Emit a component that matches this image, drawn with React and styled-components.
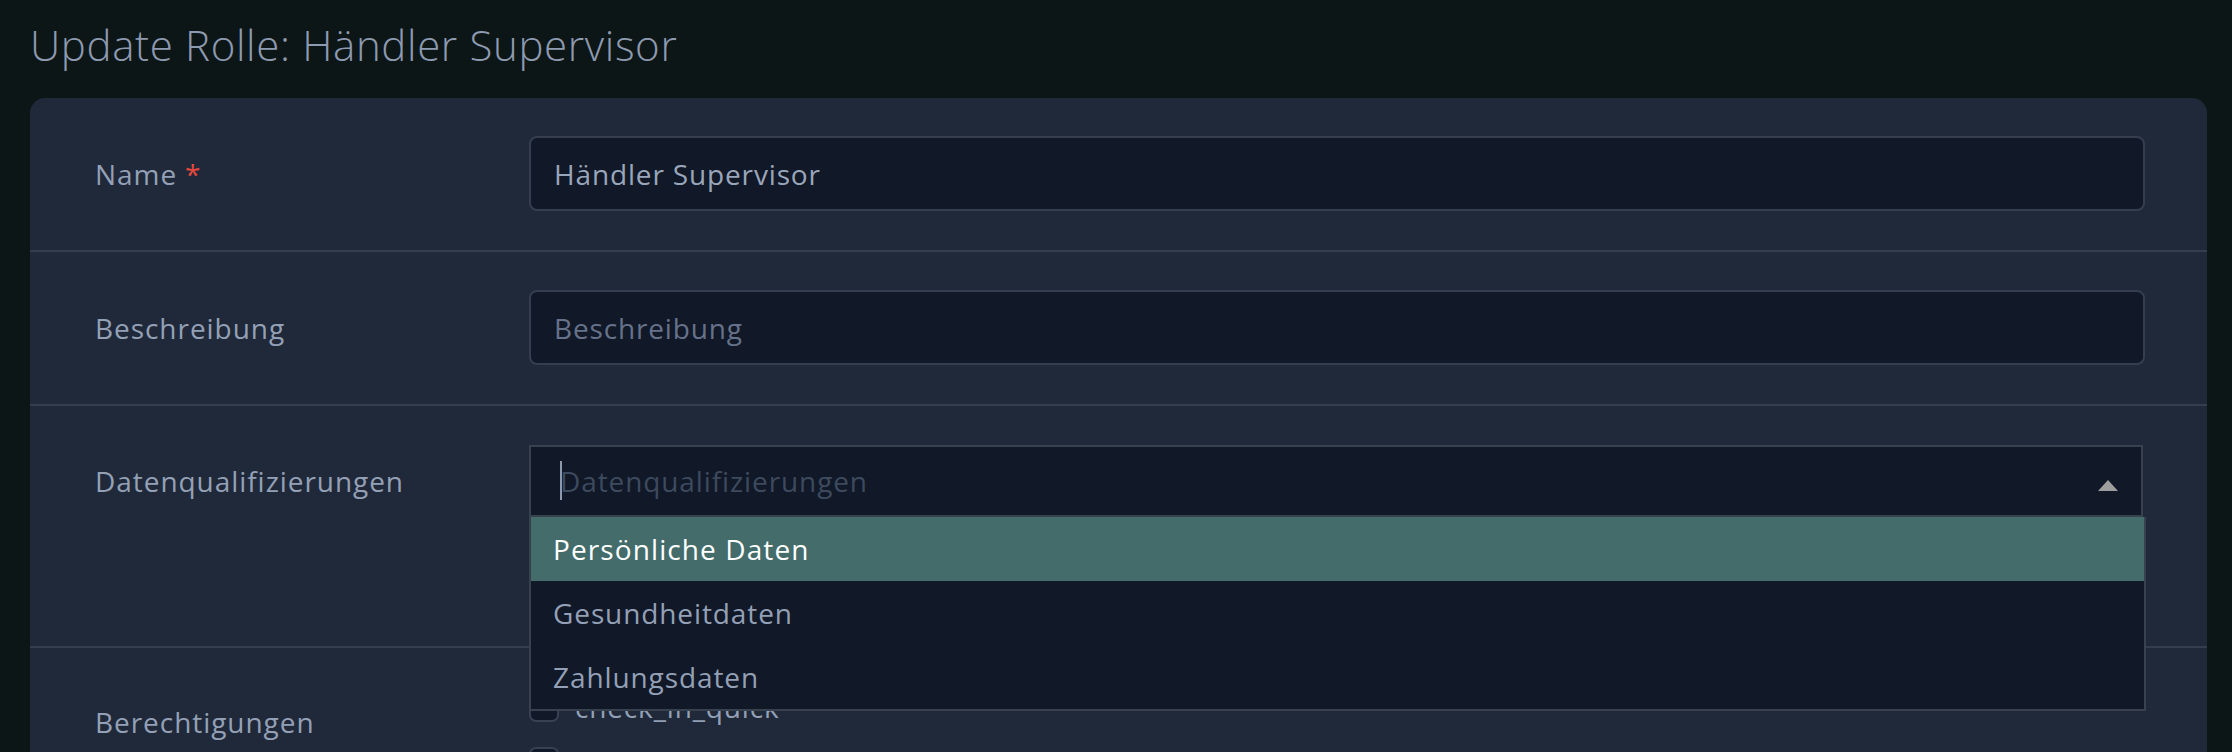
import React from "react";
import styled, { createGlobalStyle } from "styled-components";

const Global = createGlobalStyle`
  html, body { margin: 0; padding: 0; background: #0d1617; }
  body { font-family: "Open Sans", "Noto Sans", sans-serif; overflow: hidden; }
  * { box-sizing: border-box; }
`;

const Page = styled.div`
  width: 2232px;
  height: 752px;
  padding: 20px 25px 0 30px;
  overflow: hidden;
`;

const Title = styled.h1`
  margin: 0 0 28px 0;
  height: 50px;
  font-size: 42px;
  line-height: 50px;
  font-weight: 300;
  color: #8d9ab0;
  letter-spacing: 0.65px;
`;

const Card = styled.div`
  background: #202939;
  border-radius: 15px 15px 0 0;
  min-height: 700px;
`;

const Row = styled.div`
  display: grid;
  grid-template-columns: 434px 1fr;
  align-items: start;
  padding: 38px 62px 39px 65px;
  border-bottom: ${(p) => (p.$last ? "none" : "2px solid #343e4e")};
`;

const Label = styled.div`
  height: ${(p) => p.$h || 75}px;
  margin-top: ${(p) => p.$offset || 0}px;
  display: flex;
  align-items: center;
  font-size: 28px;
  letter-spacing: 0.95px;
  color: #94a0b6;
`;

const Required = styled.span`
  color: #e5483d;
  margin-left: 8px;
`;

const Input = styled.input`
  width: 100%;
  height: 75px;
  background: #111827;
  border: 2px solid #343e4f;
  border-radius: 8px;
  padding: 0 23px;
  font-family: inherit;
  font-size: 28px;
  letter-spacing: 0.85px;
  color: #9aa6ba;
  outline: none;
  &::placeholder { color: #66728a; }
`;

const SelectWrap = styled.div`
  position: relative;
  height: 162px;
  margin-top: 1px;
`;

const SelectBox = styled.div`
  height: 72px;
  background: #111827;
  border: 2px solid #38424f;
  margin-right: 2px;
  display: flex;
  align-items: center;
  padding: 0 23px 0 29px;
  position: relative;
`;

const Cursor = styled.span`
  position: absolute;
  left: 29px;
  top: 14px;
  width: 2px;
  height: 39px;
  background: #8d99ad;
`;

const Placeholder = styled.span`
  flex: 1;
  font-size: 28px;
  letter-spacing: 0.9px;
  color: #3d4a5e;
`;

const Caret = styled.svg`
  width: 20px;
  height: 11px;
  margin-top: 8px;
`;

const Menu = styled.div`
  position: absolute;
  top: 72px;
  left: 0;
  right: -1px;
  background: #111827;
  border: 2px solid #38424f;
  border-top: none;
  z-index: 5;
`;

const Option = styled.div`
  height: 64px;
  display: flex;
  align-items: center;
  padding-left: 22px;
  font-size: 28px;
  letter-spacing: ${(p) => (p.$active ? "1.1px" : "0.9px")};
  font-weight: ${(p) => (p.$active ? 500 : 400)};
  color: ${(p) => (p.$active ? "#ffffff" : "#94a0b6")};
  background: ${(p) => (p.$active ? "#436c6b" : "transparent")};
`;

const CheckList = styled.div`
  display: flex;
  flex-direction: column;
  gap: 13px;
`;

const CheckItem = styled.label`
  height: 42px;
  display: flex;
  align-items: center;
  gap: 16px;
  font-size: 28px;
  letter-spacing: 0.85px;
  color: #94a0b6;
`;

const Box = styled.span`
  width: 30px;
  height: 30px;
  border-radius: 7px;
  border: 2px solid #374151;
  background: #111827;
  flex: none;
`;

export default function App() {
  return (
    <>
      <Global />
      <Page>
        <Title>Update Rolle: Händler Supervisor</Title>
        <Card>
          <Row>
            <Label>
              Name<Required>*</Required>
            </Label>
            <Input defaultValue="Händler Supervisor" />
          </Row>
          <Row>
            <Label>Beschreibung</Label>
            <Input placeholder="Beschreibung" />
          </Row>
          <Row>
            <Label $h={72} $offset={1}>Datenqualifizierungen</Label>
            <SelectWrap>
              <SelectBox>
                <Cursor />
                <Placeholder>Datenqualifizierungen</Placeholder>
                <Caret viewBox="0 0 20 11">
                  <path d="M10 0 L20 11 L0 11 Z" fill="#9e9e9e" />
                </Caret>
              </SelectBox>
              <Menu>
                <Option $active>Persönliche Daten</Option>
                <Option>Gesundheitdaten</Option>
                <Option>Zahlungsdaten</Option>
              </Menu>
            </SelectWrap>
          </Row>
          <Row $last>
            <Label $h={72}>Berechtigungen</Label>
            <CheckList>
              <CheckItem>
                <Box />
                check_in_quick
              </CheckItem>
              <CheckItem>
                <Box />
                check_in
              </CheckItem>
            </CheckList>
          </Row>
        </Card>
      </Page>
    </>
  );
}
